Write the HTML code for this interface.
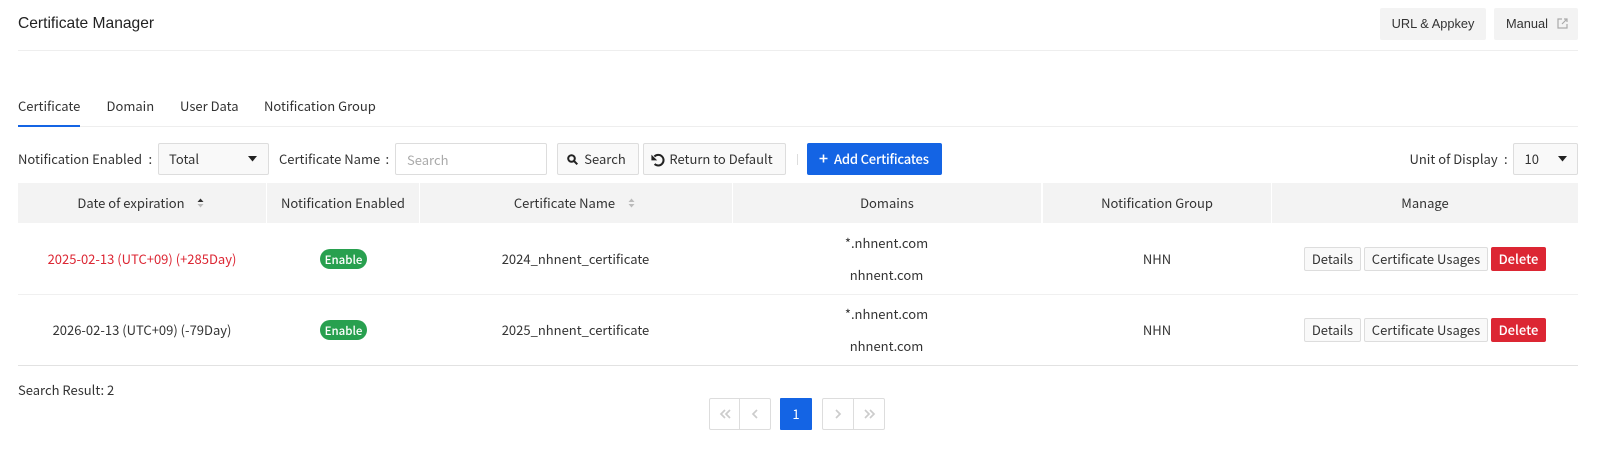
<!DOCTYPE html>
<html><head><meta charset="utf-8"><style>
html,body{margin:0;padding:0;background:#fff}
body{position:relative;width:1602px;height:451px;overflow:hidden;font-family:"Noto Sans CJK KR","Liberation Sans",sans-serif;font-size:13px;color:#333}
.a{position:absolute;white-space:nowrap}
.t{position:absolute;white-space:nowrap;height:20px;line-height:20px}
.c{position:absolute;white-space:nowrap;height:20px;line-height:20px;text-align:center}
.b{position:absolute;box-sizing:border-box;white-space:nowrap;text-align:center;border:1px solid #ddd;background:#f9f9f9;border-radius:2px}
.h{position:absolute;top:183px;height:40px;line-height:40px;background:#f3f3f3;text-align:center}
.top{position:absolute;top:8px;height:32px;line-height:32px;background:#f3f3f3;border-radius:2px;font-family:"Liberation Sans",sans-serif;font-size:12.8px;color:#333}
.line{position:absolute;height:1px}
.bd{position:absolute;left:320px;width:47px;height:20px;line-height:22px;background:#28a04f;color:#fff;border-radius:10px;text-align:center;font-size:11.5px;font-weight:500}
svg{position:absolute;display:block}
</style></head><body>
<div class="t" style="left:18px;top:14px;font-family:'Liberation Sans',sans-serif;font-size:15.6px;color:#222">Certificate Manager</div>
<div class="top" style="left:1380px;width:106px;text-align:center">URL &amp; Appkey</div>
<div class="top" style="left:1494px;width:84px"><span style="position:absolute;left:12px">Manual</span>
<svg style="left:63px;top:10px" width="11" height="11" viewBox="0 0 11 11" fill="none" stroke="#aaa" stroke-width="1.2"><path d="M5 1H1V10H10V6"/><path d="M7 1H10V4M10 1L5 6" /></svg></div>
<div class="line" style="left:18px;top:50px;width:1560px;background:#eee"></div>

<div class="t" style="left:18px;top:96px">Certificate</div>
<div class="t" style="left:106.5px;top:96px">Domain</div>
<div class="t" style="left:180px;top:96px">User Data</div>
<div class="t" style="left:264px;top:96px">Notification Group</div>
<div class="line" style="left:18px;top:126px;width:1560px;background:#eee"></div>
<div class="a" style="left:18px;top:125px;width:62px;height:2px;background:#1464e4"></div>

<div class="t" style="left:18px;top:149px">Notification Enabled</div>
<div class="t" style="left:148.5px;top:149px">:</div>
<div class="b" style="left:158px;top:143px;width:111px;height:32px;line-height:30px;text-align:left;padding-left:10px">Total</div>
<svg style="left:248px;top:156px" width="9" height="6" viewBox="0 0 9 6"><path d="M0 0H9L4.5 5.5Z" fill="#222"/></svg>
<div class="t" style="left:279px;top:149px">Certificate Name</div>
<div class="t" style="left:385.5px;top:149px">:</div>
<div class="b" style="left:395px;top:143px;width:152px;height:32px;line-height:32px;text-align:left;padding-left:11px;background:#fff;color:#aaa">Search</div>
<div class="b" style="left:557px;top:143px;width:82px;height:32px;line-height:30px;padding-left:14px">Search</div>
<svg style="left:567px;top:154px" width="11" height="11" viewBox="0 0 11 11" fill="none" stroke="#222" stroke-width="2"><circle cx="4.5" cy="4.5" r="3.3"/><path d="M7 7L10.3 10.3"/></svg>
<div class="b" style="left:643px;top:143px;width:143px;height:32px;line-height:30px;padding-left:13px">Return to Default</div>
<svg style="left:651px;top:153px" width="14" height="14" viewBox="0 0 14 14" fill="none"><path d="M3.4 3.5A5.3 5.3 0 1 1 3.6 11" stroke="#222" stroke-width="2"/><path d="M0.4 1.6V7.4H6.2Z" fill="#222"/></svg>
<div class="a" style="left:797px;top:154px;width:1px;height:11px;background:#ddd"></div>
<div class="a" style="left:807px;top:143px;width:135px;height:32px;line-height:32px;background:#1464e4;color:#fff;border-radius:2px;font-weight:500"><span style="position:absolute;left:27px;letter-spacing:-0.2px">Add Certificates</span>
<svg style="left:12px;top:11px" width="9" height="9" viewBox="0 0 9 9"><path d="M4.5 0.5V8.5M0.5 4.5H8.5" stroke="#fff" stroke-width="1.6"/></svg></div>
<div class="t" style="left:1409.5px;top:149px">Unit of Display</div>
<div class="t" style="left:1504px;top:149px">:</div>
<div class="b" style="left:1513px;top:143px;width:65px;height:32px;line-height:30px;text-align:left;padding-left:10.5px">10</div>
<svg style="left:1558px;top:156px" width="9" height="6" viewBox="0 0 9 6"><path d="M0 0H9L4.5 5.5Z" fill="#222"/></svg>

<div class="h" style="left:18px;width:248px"><span style="position:relative;left:-11px">Date of expiration</span></div>
<svg style="left:197px;top:198px" width="7" height="10" viewBox="0 0 7 10"><path d="M0.5 4H6.5L3.5 0.5Z" fill="#333"/><path d="M0.5 6H6.5L3.5 9.5Z" fill="#bbb"/></svg>
<div class="h" style="left:267px;width:152px">Notification Enabled</div>
<div class="h" style="left:420px;width:312px"><span style="position:relative;left:-11.5px">Certificate Name</span></div>
<svg style="left:628px;top:198px" width="7" height="10" viewBox="0 0 7 10"><path d="M0.5 4H6.5L3.5 0.5Z" fill="#bbb"/><path d="M0.5 6H6.5L3.5 9.5Z" fill="#bbb"/></svg>
<div class="h" style="left:733px;width:308px"><span style="position:relative;left:0px">Domains</span></div>
<div class="h" style="left:1043px;width:228px">Notification Group</div>
<div class="h" style="left:1272px;width:306px">Manage</div>

<div class="c" style="left:18px;width:248px;top:249px;color:#dc2633">2025-02-13 (UTC+09) (+285Day)</div>
<div class="bd" style="top:249px">Enable</div>
<div class="c" style="left:420px;width:311px;top:249px">2024_nhnent_certificate</div>
<div class="c" style="left:733px;width:307px;top:233px">*.nhnent.com</div>
<div class="c" style="left:733px;width:307px;top:265px">nhnent.com</div>
<div class="c" style="left:1043px;width:228px;top:249px">NHN</div>
<div class="b" style="left:1304px;top:247px;width:57px;height:24px;line-height:22px">Details</div>
<div class="b" style="left:1364px;top:247px;width:124px;height:24px;line-height:22px">Certificate Usages</div>
<div class="a" style="left:1491px;top:247px;width:55px;height:24px;line-height:24px;background:#dc2633;color:#fff;text-align:center;border-radius:2px;font-weight:500">Delete</div>
<div class="line" style="left:18px;top:294px;width:1560px;background:#f0f0f0"></div>

<div class="c" style="left:18px;width:248px;top:320px">2026-02-13 (UTC+09) (-79Day)</div>
<div class="bd" style="top:320px">Enable</div>
<div class="c" style="left:420px;width:311px;top:320px">2025_nhnent_certificate</div>
<div class="c" style="left:733px;width:307px;top:304px">*.nhnent.com</div>
<div class="c" style="left:733px;width:307px;top:336px">nhnent.com</div>
<div class="c" style="left:1043px;width:228px;top:320px">NHN</div>
<div class="b" style="left:1304px;top:318px;width:57px;height:24px;line-height:22px">Details</div>
<div class="b" style="left:1364px;top:318px;width:124px;height:24px;line-height:22px">Certificate Usages</div>
<div class="a" style="left:1491px;top:318px;width:55px;height:24px;line-height:24px;background:#dc2633;color:#fff;text-align:center;border-radius:2px;font-weight:500">Delete</div>
<div class="line" style="left:18px;top:365px;width:1560px;background:#e2e2e2"></div>

<div class="t" style="left:18px;top:380px">Search Result: 2</div>

<svg style="left:709px;top:398px" width="176" height="32" viewBox="0 0 176 32" fill="none">
<rect x="0.5" y="0.5" width="61" height="31" rx="1.5" stroke="#ddd"/><path d="M30.5 0V32" stroke="#ddd"/>
<rect x="113.5" y="0.5" width="62" height="31" rx="1.5" stroke="#ddd"/><path d="M144.5 0V32" stroke="#ddd"/>
<g stroke="#ccc" stroke-width="1.7">
<path d="M16 12L12 16L16 20M21 12L17 16L21 20"/>
<path d="M48 12L44 16L48 20"/>
<path d="M127 12L131 16L127 20"/>
<path d="M156 12L160 16L156 20M161 12L165 16L161 20"/>
</g></svg>
<div class="a" style="left:780px;top:398px;width:32px;height:32px;line-height:32px;background:#1464e4;color:#fff;text-align:center;border-radius:1px">1</div>
</body></html>
